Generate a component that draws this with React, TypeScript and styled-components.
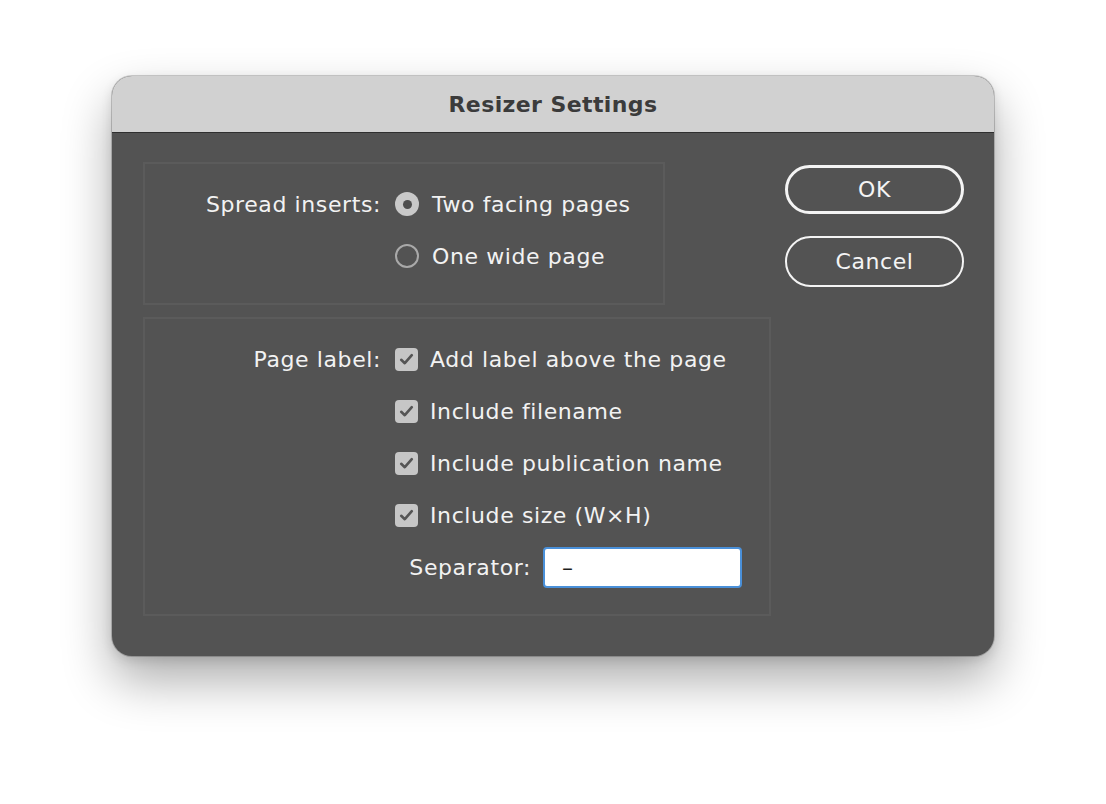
import React from 'react'
import styled, { createGlobalStyle } from 'styled-components'

const Global = createGlobalStyle`
    html, body {
        margin: 0;
        padding: 0;
        background: #ffffff;
    }
    body {
        font-family: "DejaVu Sans", "Noto Sans", sans-serif;
        -webkit-font-smoothing: antialiased;
    }
`

const Page = styled.div`
    width: 1106px;
    height: 804px;
    padding: 76px 0 0 112px;
    box-sizing: border-box;
`

const Window = styled.div`
    width: 882px;
    height: 580px;
    border-radius: 20px;
    overflow: hidden;
    background: #535353;
    box-shadow: 0 0 0 1px rgba(0, 0, 0, 0.18), 0 24px 50px rgba(0, 0, 0, 0.33), 0 4px 12px rgba(0, 0, 0, 0.12);
    display: flex;
    flex-direction: column;
`

const TitleBar = styled.div`
    height: 57px;
    background: #d1d1d1;
    border-bottom: 1px solid #2f2f2f;
    display: flex;
    align-items: center;
    justify-content: center;
    font-size: 22px;
    font-weight: bold;
    letter-spacing: 0.4px;
    color: #3b3b3b;
    box-sizing: border-box;
`

const Body = styled.div`
    flex: 1;
    display: flex;
    padding: 29px 31px 0 31px;
    gap: 14px;
`

const Groups = styled.div`
    display: flex;
    flex-direction: column;
    gap: 12px;
`

const Group = styled.div<{ w: number }>`
    width: ${(p) => p.w}px;
    box-sizing: border-box;
    border: 2px solid #5b5b5b;
    padding: 14px 0 21px 0;
    display: flex;
    flex-direction: column;
`

const Row = styled.div`
    height: 52px;
    display: flex;
    align-items: center;
`

const Text = styled.span`
    color: #f2f2f2;
    font-size: 22px;
    letter-spacing: 0.6px;
    white-space: nowrap;
`

const FieldLabel = styled(Text)`
    width: 250px;
    padding-right: 14px;
    box-sizing: border-box;
    text-align: right;
`

const Option = styled.label`
    display: flex;
    align-items: center;
    gap: 12px;
`

const Radio = styled.span<{ on?: boolean }>`
    width: 24px;
    height: 24px;
    border-radius: 50%;
    box-sizing: border-box;
    display: flex;
    align-items: center;
    justify-content: center;
    background: ${(p) => (p.on ? '#c9c9c9' : 'transparent')};
    border: ${(p) => (p.on ? 'none' : '2px solid #a9a9a9')};
    margin-right: 1px;
    &::after {
        content: '';
        display: ${(p) => (p.on ? 'block' : 'none')};
        width: 9px;
        height: 9px;
        border-radius: 50%;
        background: #4e4e4e;
    }
`

const Check = styled.span`
    width: 23px;
    height: 23px;
    border-radius: 4px;
    background: #c6c6c6;
    display: flex;
    align-items: center;
    justify-content: center;
`

const SepLabel = styled(Text)`
    width: 136px;
    text-align: right;
`

const Input = styled.div`
    margin-left: 12px;
    width: 199px;
    height: 41px;
    box-sizing: border-box;
    background: #ffffff;
    border: 2px solid #4a90d9;
    border-radius: 4px;
    display: flex;
    align-items: center;
    padding-left: 17px;
    font-size: 22px;
    color: #1e1e1e;
`

const Buttons = styled.div`
    display: flex;
    flex-direction: column;
    gap: 22px;
    padding-top: 3px;
`

const Button = styled.button<{ primary?: boolean }>`
    width: 179px;
    height: ${(p) => (p.primary ? 49 : 51)}px;
    border-radius: 26px;
    background: transparent;
    border: ${(p) => (p.primary ? 3 : 2)}px solid #f4f4f4;
    color: #f4f4f4;
    font-family: inherit;
    font-size: 22px;
    letter-spacing: 0.6px;
    cursor: pointer;
`

const Tick = () => (
    <svg width="15" height="13" viewBox="0 0 15 13">
        <path d="M2.2 6.8 L5.8 10.2 L12.8 2.2" fill="none" stroke="#555555" strokeWidth="2.6" strokeLinecap="round" strokeLinejoin="round" />
    </svg>
)

const CheckOption: React.FC<{ children: React.ReactNode }> = ({ children }) => (
    <Option>
        <Check>
            <Tick />
        </Check>
        <Text>{children}</Text>
    </Option>
)

const App = () => {
    return (
        <Page>
            <Global />
            <Window>
                <TitleBar>Resizer Settings</TitleBar>
                <Body>
                    <Groups>
                        <Group w={522}>
                            <Row>
                                <FieldLabel>Spread inserts:</FieldLabel>
                                <Option>
                                    <Radio on />
                                    <Text>Two facing pages</Text>
                                </Option>
                            </Row>
                            <Row>
                                <FieldLabel />
                                <Option>
                                    <Radio />
                                    <Text>One wide page</Text>
                                </Option>
                            </Row>
                        </Group>
                        <Group w={628}>
                            <Row>
                                <FieldLabel>Page label:</FieldLabel>
                                <CheckOption>Add label above the page</CheckOption>
                            </Row>
                            <Row>
                                <FieldLabel />
                                <CheckOption>Include filename</CheckOption>
                            </Row>
                            <Row>
                                <FieldLabel />
                                <CheckOption>Include publication name</CheckOption>
                            </Row>
                            <Row>
                                <FieldLabel />
                                <CheckOption>Include size (W×H)</CheckOption>
                            </Row>
                            <Row>
                                <FieldLabel />
                                <SepLabel>Separator:</SepLabel>
                                <Input>–</Input>
                            </Row>
                        </Group>
                    </Groups>
                    <Buttons>
                        <Button primary>OK</Button>
                        <Button>Cancel</Button>
                    </Buttons>
                </Body>
            </Window>
        </Page>
    )
}

export default App
